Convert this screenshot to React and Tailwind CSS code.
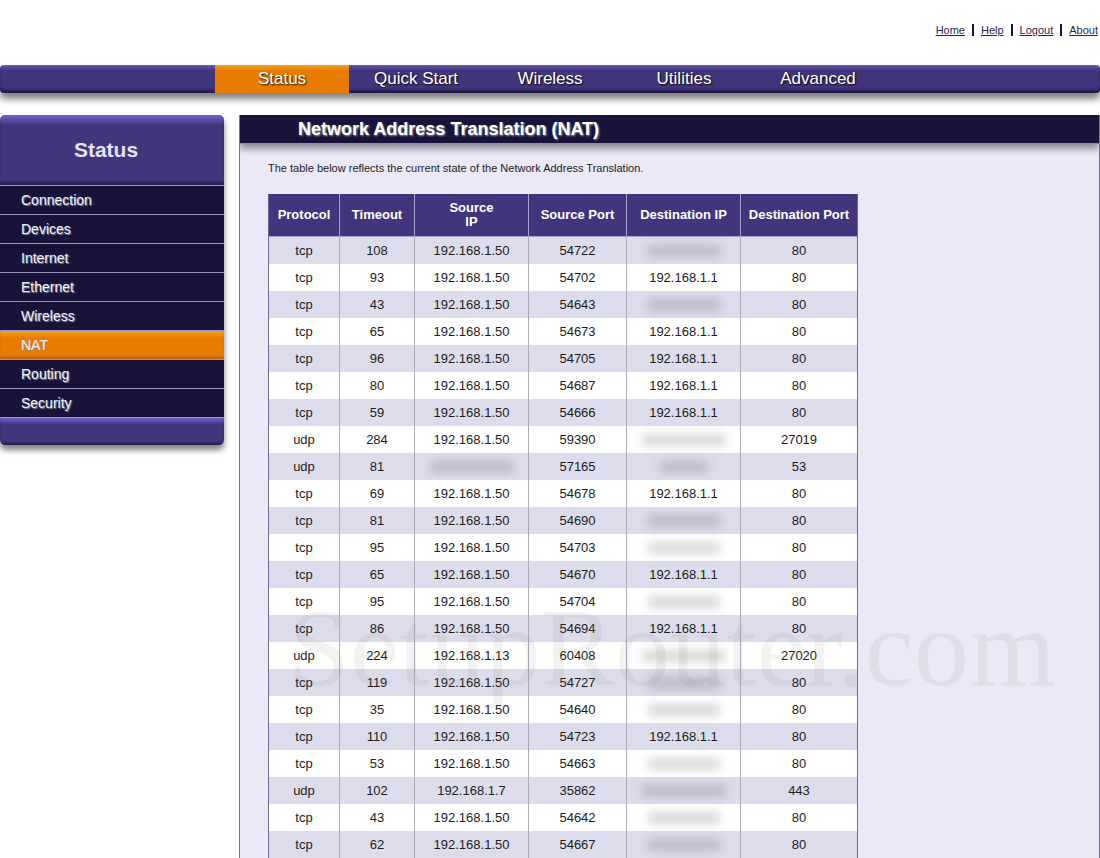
import React, { useState } from "react";
import clsx from "clsx";

const topLinks = ["Home", "Help", "Logout", "About"];
const tabs = ["Status", "Quick Start", "Wireless", "Utilities", "Advanced"];
const menuItems = [
  "Connection",
  "Devices",
  "Internet",
  "Ethernet",
  "Wireless",
  "NAT",
  "Routing",
  "Security",
];

const columns = [
  { label: "Protocol", width: "w-[71px]" },
  { label: "Timeout", width: "w-[75px]" },
  { label: "Source\nIP", width: "w-[114px]" },
  { label: "Source Port", width: "w-[98px]" },
  { label: "Destination IP", width: "w-[114px]" },
  { label: "Destination Port", width: "w-[116px]" },
];

// Addresses that must not be shown; the value is the width of the smudge
const HIDDEN = { hidden: "w-[72px]" };
const HIDDEN_WIDE = { hidden: "w-[84px]" };
const HIDDEN_SHORT = { hidden: "w-12" };

const rows = [
  ["tcp", "108", "192.168.1.50", "54722", HIDDEN, "80"],
  ["tcp", "93", "192.168.1.50", "54702", "192.168.1.1", "80"],
  ["tcp", "43", "192.168.1.50", "54643", HIDDEN, "80"],
  ["tcp", "65", "192.168.1.50", "54673", "192.168.1.1", "80"],
  ["tcp", "96", "192.168.1.50", "54705", "192.168.1.1", "80"],
  ["tcp", "80", "192.168.1.50", "54687", "192.168.1.1", "80"],
  ["tcp", "59", "192.168.1.50", "54666", "192.168.1.1", "80"],
  ["udp", "284", "192.168.1.50", "59390", HIDDEN_WIDE, "27019"],
  ["udp", "81", HIDDEN_WIDE, "57165", HIDDEN_SHORT, "53"],
  ["tcp", "69", "192.168.1.50", "54678", "192.168.1.1", "80"],
  ["tcp", "81", "192.168.1.50", "54690", HIDDEN, "80"],
  ["tcp", "95", "192.168.1.50", "54703", HIDDEN, "80"],
  ["tcp", "65", "192.168.1.50", "54670", "192.168.1.1", "80"],
  ["tcp", "95", "192.168.1.50", "54704", HIDDEN, "80"],
  ["tcp", "86", "192.168.1.50", "54694", "192.168.1.1", "80"],
  ["udp", "224", "192.168.1.13", "60408", HIDDEN_WIDE, "27020"],
  ["tcp", "119", "192.168.1.50", "54727", HIDDEN, "80"],
  ["tcp", "35", "192.168.1.50", "54640", HIDDEN, "80"],
  ["tcp", "110", "192.168.1.50", "54723", "192.168.1.1", "80"],
  ["tcp", "53", "192.168.1.50", "54663", HIDDEN, "80"],
  ["udp", "102", "192.168.1.7", "35862", HIDDEN_WIDE, "443"],
  ["tcp", "43", "192.168.1.50", "54642", HIDDEN, "80"],
  ["tcp", "62", "192.168.1.50", "54667", HIDDEN, "80"],
];

function TopLinks() {
  return (
    <div className="flex h-[65px] justify-end pt-6 pr-[2px]">
      <ul className="flex h-3 items-center divide-x-2 divide-[#19133a]">
        {topLinks.map((link) => (
          <li key={link} className="flex h-3 items-center px-[7px] last:pr-0">
            <a href="#" className="text-[11px] leading-3 text-[#2a2350] underline">
              {link}
            </a>
          </li>
        ))}
      </ul>
    </div>
  );
}

function TabBar({ active, onSelect }) {
  return (
    <nav className="flex h-7 rounded-[4px] bg-linear-to-b from-[#6a58b5] via-[#43357b] via-20% to-[#43357b] to-75% pl-[215px] shadow-[inset_0_-4px_3px_-1px_#231b4a,0_6px_7px_rgba(0,0,0,0.5)]">
      {tabs.map((tab) => (
        <button
          key={tab}
          type="button"
          onClick={() => onSelect(tab)}
          className={clsx(
            "w-[134px] text-[17px] leading-7 text-white [text-shadow:1px_1px_2px_#000]",
            tab === active &&
              "bg-linear-to-b from-[#f9a11b] via-[#e87c00] via-20% to-[#e87c00]"
          )}
        >
          {tab}
        </button>
      ))}
    </nav>
  );
}

function Sidebar({ active, onSelect }) {
  return (
    <aside className="w-56 shrink-0 self-start overflow-hidden rounded-[5px] shadow-[0_5px_6px_rgba(0,0,0,0.5)]">
      <h2 className="h-[70px] bg-linear-to-b from-[#7361cd] via-[#43357b] via-15% to-[#43357b] pr-3 text-center text-[21px] leading-[70px] font-bold text-[#e6e1fa] shadow-[inset_0_-4px_3px_-1px_#2a2156]">
        Status
      </h2>
      <ul>
        {menuItems.map((item) => (
          <li key={item} className="border-t border-[#9a92c0] bg-[#19133a]">
            <a
              href="#"
              onClick={() => onSelect(item)}
              className={clsx(
                "block h-7 pl-[21px] text-sm leading-7 text-[#f3f1fb] [text-shadow:1px_1px_1px_#8a8a8a]",
                item === active &&
                  "bg-linear-to-b from-[#f6a01c] via-[#e87c00] via-25% to-[#e87c00] shadow-[inset_0_-3px_3px_-1px_#b85a00]"
              )}
            >
              {item}
            </a>
          </li>
        ))}
      </ul>
      <div className="h-7 border-t border-[#9a92c0] bg-linear-to-b from-[#7361cd] via-[#43357b] via-25% to-[#43357b] shadow-[inset_0_-3px_3px_-1px_#231b4a]" />
    </aside>
  );
}

function Cell({ value }) {
  if (value.hidden) {
    return (
      <span
        aria-label="hidden"
        className={clsx("mx-auto block h-3 bg-black/15 blur-[5px]", value.hidden)}
      />
    );
  }
  return value;
}

function NatTable() {
  return (
    <table className="w-[590px] table-fixed border-separate border-spacing-0 border-x border-[#6d6893] text-center text-[13px] leading-[14px]">
      <thead>
        <tr className="h-[43px] bg-[#43357b] text-white">
          {columns.map((col) => (
            <th
              key={col.label}
              className={clsx(
                "border-r border-b border-[#a79fd0] px-[6px] font-bold whitespace-pre-line last:border-r-0",
                col.width
              )}
            >
              {col.label}
            </th>
          ))}
        </tr>
      </thead>
      <tbody className="text-[#1c1c1c]">
        {rows.map((row, i) => (
          <tr key={i} className="h-[27px] odd:bg-[#dddcec] even:bg-white">
            {row.map((value, j) => (
              <td key={j} className="border-r border-[#adabba] last:border-r-0">
                <Cell value={value} />
              </td>
            ))}
          </tr>
        ))}
      </tbody>
    </table>
  );
}

function App() {
  const [tab, setTab] = useState("Status");
  const [item, setItem] = useState("NAT");

  return (
    <div className="relative flex min-h-screen flex-col bg-white font-['Liberation_Sans',Arial,sans-serif]">
      <TopLinks />
      <TabBar active={tab} onSelect={setTab} />
      <div className="flex flex-1 gap-[15px] pt-[22px]">
        <Sidebar active={item} onSelect={setItem} />
        <main className="min-w-0 flex-1 overflow-hidden border-x border-[#77738c] bg-[#ebe8f7]">
          <h1 className="h-7 bg-[#19133a] pl-[58px] text-lg leading-7 font-bold text-white shadow-[0_1px_0_#8f8ba6,0_6px_7px_rgba(0,0,0,0.4)] [text-shadow:1px_1px_2px_#a0a0a0]">
            Network Address Translation (NAT)
          </h1>
          <div className="px-7 pt-[17px]">
            <p className="mb-[18px] text-[11px] leading-4 text-[#1c1c1c]">
              The table below reflects the current state of the Network Address
              Translation.
            </p>
            <NatTable />
          </div>
        </main>
      </div>

      {/* Watermark over the lower part of the page */}
      <div className="pointer-events-none absolute top-[592px] left-[288px] font-['Liberation_Serif',serif] text-[111px] leading-none text-[#808078]/10">
        SetupRouter.com
      </div>
    </div>
  );
}

export default App;
